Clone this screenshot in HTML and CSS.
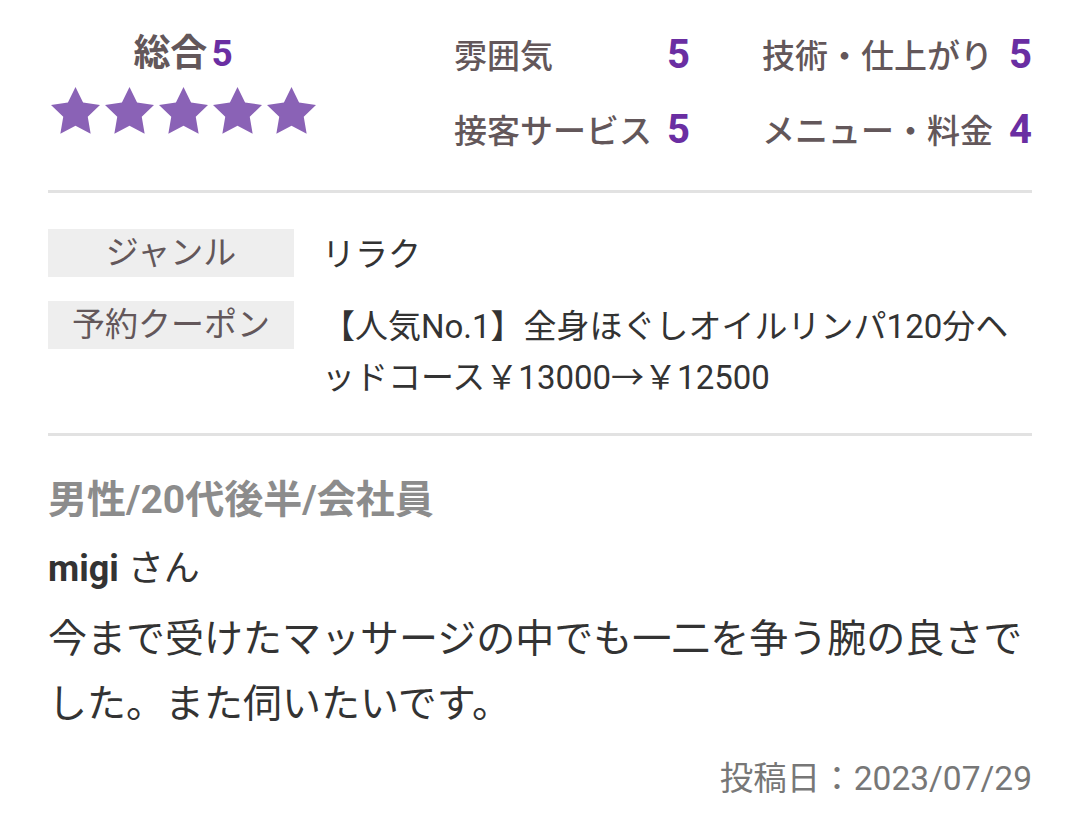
FILE: index.html
```html
<!DOCTYPE html>
<html lang="ja">
<head>
    <meta charset="UTF-8">
    <meta name="viewport" content="width=device-width, initial-scale=1.0">
    <title>口コミ</title>
    <link rel="stylesheet" href="styles.css">
</head>
<body>
    <div class="review">
        <div class="scores">
            <div class="total">
                <div class="total-label">総合<span class="num">5</span></div>
                <div class="stars">
                    <svg class="star" viewBox="2 2 20 19.1"><polygon points="12,2 15.09,8.26 22,9.27 17,14.14 18.18,21.02 12,17.77 5.82,21.02 7,14.14 2,9.27 8.91,8.26"/></svg>
                    <svg class="star" viewBox="2 2 20 19.1"><polygon points="12,2 15.09,8.26 22,9.27 17,14.14 18.18,21.02 12,17.77 5.82,21.02 7,14.14 2,9.27 8.91,8.26"/></svg>
                    <svg class="star" viewBox="2 2 20 19.1"><polygon points="12,2 15.09,8.26 22,9.27 17,14.14 18.18,21.02 12,17.77 5.82,21.02 7,14.14 2,9.27 8.91,8.26"/></svg>
                    <svg class="star" viewBox="2 2 20 19.1"><polygon points="12,2 15.09,8.26 22,9.27 17,14.14 18.18,21.02 12,17.77 5.82,21.02 7,14.14 2,9.27 8.91,8.26"/></svg>
                    <svg class="star" viewBox="2 2 20 19.1"><polygon points="12,2 15.09,8.26 22,9.27 17,14.14 18.18,21.02 12,17.77 5.82,21.02 7,14.14 2,9.27 8.91,8.26"/></svg>
                </div>
            </div>
            <div class="details">
                <div class="item"><span>雰囲気</span><span class="num">5</span></div>
                <div class="item"><span>技術・仕上がり</span><span class="num">5</span></div>
                <div class="item"><span>接客サービス</span><span class="num">5</span></div>
                <div class="item"><span>メニュー・料金</span><span class="num">4</span></div>
            </div>
        </div>

        <hr class="divider">

        <div class="info">
            <div class="info-row">
                <div class="info-label">ジャンル</div>
                <div class="info-value">リラク</div>
            </div>
            <div class="info-row">
                <div class="info-label">予約クーポン</div>
                <div class="info-value">【人気No.1】全身ほぐしオイルリンパ120分ヘッドコース￥13000→￥12500</div>
            </div>
        </div>

        <hr class="divider">

        <div class="profile">男性/20代後半/会社員</div>
        <div class="user"><b>migi</b> さん</div>
        <p class="comment">今まで受けたマッサージの中でも一二を争う腕の良さでした。また伺いたいです。</p>
        <div class="date">投稿日：2023/07/29</div>
    </div>
</body>
</html>
```

FILE: styles.css
```css
body {
    margin: 0;
    background: #ffffff;
    font-family: Roboto, "Noto Sans CJK JP", sans-serif;
    color: #333333;
}
.review {
    padding: 0 48px;
}
.scores {
    display: flex;
    justify-content: space-between;
    padding-top: 18px;
}
.total {
    width: 270px;
    display: flex;
    flex-direction: column;
    align-items: center;
}
.total-label {
    margin-top: 6px;
    font-size: 37px;
    line-height: 60px;
    font-weight: bold;
    color: #63575a;
}
.total-label .num {
    margin-left: 4px;
}
.num {
    color: #6a2ea2;
    font-weight: bold;
}
.stars {
    display: flex;
    gap: 5px;
    margin-top: 3px;
}
.star {
    width: 49px;
    height: 47px;
    fill: #8a62b6;
}
.details {
    display: grid;
    grid-template-columns: 236px 270px;
    column-gap: 72px;
}
.item {
    display: flex;
    justify-content: space-between;
    align-items: baseline;
    font-size: 33px;
    line-height: 73px;
    font-weight: 500;
    color: #63575a;
}
.item .num {
    font-size: 40px;
}
.divider {
    margin: 22px 0 0;
    border: none;
    height: 3px;
    background: #e2e2e2;
}
.info {
    display: flex;
    flex-direction: column;
    gap: 21px;
    margin: 36px 0 30px;
}
.info-row {
    display: flex;
    align-items: flex-start;
    gap: 28px;
}
.info-label {
    flex: 0 0 246px;
    height: 48px;
    line-height: 48px;
    background: #eeeeee;
    text-align: center;
    font-size: 33px;
    color: #63575a;
}
.info-value {
    flex: 1;
    font-size: 33px;
    line-height: 51px;
    color: #333333;
}
.profile {
    margin-top: 38px;
    font-size: 39px;
    line-height: 52px;
    font-weight: bold;
    color: #8c8c8c;
}
.user {
    margin-top: 18px;
    font-size: 36px;
    line-height: 50px;
    color: #333333;
}
.comment {
    margin: 13px 0 0;
    font-size: 39px;
    line-height: 65px;
    color: #333333;
}
.date {
    margin-top: 19px;
    text-align: right;
    font-size: 33.5px;
    line-height: 46px;
    color: #777777;
}
```
